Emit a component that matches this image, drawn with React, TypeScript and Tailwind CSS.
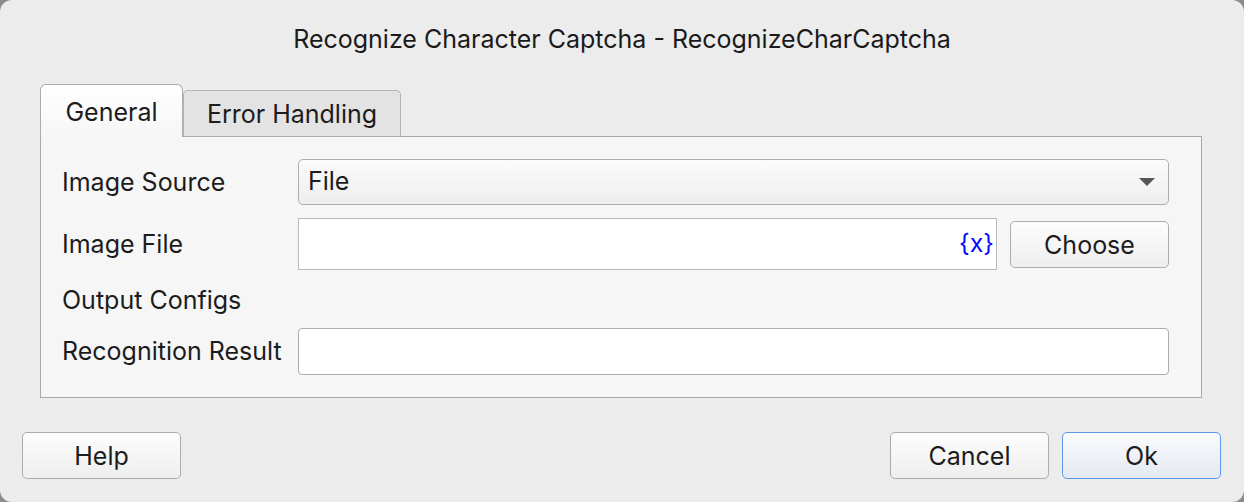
import React from 'react';

const font = { fontFamily: 'Inter, "Liberation Sans", Arial, sans-serif' };

function Btn({ label, primary }: { label: string; primary?: boolean }) {
  return (
    <button
      className={
        primary
          ? 'w-[159px] h-[47px] pt-[3px] rounded-[5px] border-[1.5px] border-[#5b9be6] bg-gradient-to-b from-[#fafbfd] to-[#e4e9f1] text-[25px] text-[#1c1c1c]'
          : 'w-[159px] h-[47px] pt-[3px] rounded-[5px] border-[1.5px] border-[#acacac] bg-gradient-to-b from-[#fdfdfd] to-[#eeeeee] text-[25px] text-[#1c1c1c]'
      }
    >
      {label}
    </button>
  );
}

export default function App() {
  return (
    <div className="w-[1244px] h-[502px] bg-[#8c8c8c]" style={font}>
      <div className="h-full rounded-[12px] bg-[#ececec] flex flex-col text-[#1c1c1c]">
        {/* Title */}
        <div className="h-[80px] flex items-center justify-center text-[25px] text-[#1a1a1a]">
          Recognize Character Captcha - RecognizeCharCaptcha
        </div>

        {/* Tabs */}
        <div className="mt-[4px] px-[40px] flex items-end relative z-10 -mb-px">
          <div className="w-[143px] h-[53px] rounded-t-[6px] border border-b-0 border-[#acacac] bg-gradient-to-b from-[#ffffff] to-[#f6f6f6] flex items-center justify-center text-[25px] pt-[4px]">
            General
          </div>
          <div className="w-[218px] h-[47px] rounded-t-[5px] border border-b-[#acacac] border-[#b4b4b4] bg-[#e3e3e3] flex items-center justify-center text-[25px] pt-[3px]">
            Error Handling
          </div>
        </div>

        {/* Panel */}
        <div className="ml-[40px] mr-[42px] h-[262px] border border-[#a9a9a9] bg-[#f6f6f6] pl-[21px] pr-[32px] pt-[22px] flex flex-col">
          <div className="flex items-center h-[46px]">
            <div className="w-[236px] text-[25px] pt-[1px]">Image Source</div>
            <div className="flex-1 h-[46px] rounded-[5px] border-[1.5px] border-[#adadad] bg-gradient-to-b from-[#fbfbfb] to-[#eeeeee] flex items-center pl-[9px] pr-[13px] text-[25px]">
              <span className="flex-1">File</span>
              <svg width="16" height="8" viewBox="0 0 16 8">
                <path d="M0 0 L16 0 L8 8 Z" fill="#555" />
              </svg>
            </div>
          </div>

          <div className="flex items-center h-[52px] mt-[13px]">
            <div className="w-[236px] text-[25px] pt-[1px]">Image File</div>
            <div className="flex-1 h-[52px] border border-[#b9b9b9] bg-white flex items-center justify-end pr-[2px]">
              <span className="text-[25px] text-[#0a0aff]">{'{x}'}</span>
            </div>
            <div className="ml-[13px]">
              <Btn label="Choose" />
            </div>
          </div>

          <div className="flex items-center h-[58px] pt-[4px]">
            <div className="text-[25px]">Output Configs</div>
          </div>

          <div className="flex items-center h-[47px]">
            <div className="w-[236px] text-[25px]">Recognition Result</div>
            <div className="flex-1 h-[47px] rounded-[4px] border-[1.5px] border-[#adadad] bg-white" />
          </div>
        </div>

        {/* Footer */}
        <div className="mt-[34px] pl-[22px] pr-[23px] flex items-center">
          <Btn label="Help" />
          <div className="flex-1" />
          <Btn label="Cancel" />
          <div className="ml-[13px]">
            <Btn label="Ok" primary />
          </div>
        </div>
      </div>
    </div>
  );
}
